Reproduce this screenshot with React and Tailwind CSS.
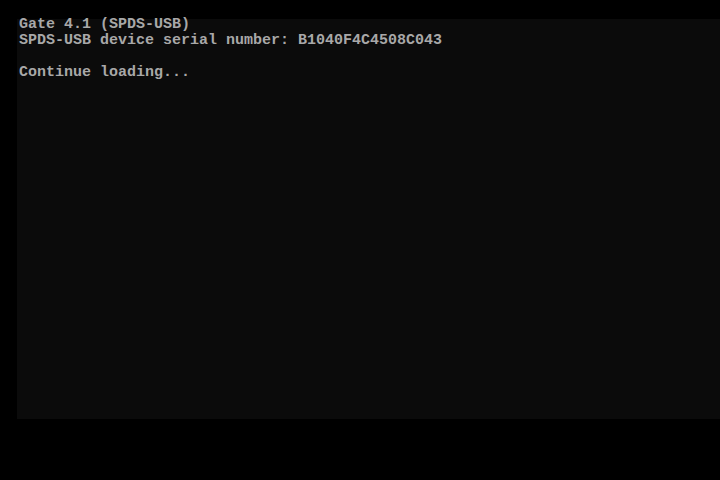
export default function App() {
  const lines = [
    'Gate 4.1 (SPDS-USB)',
    'SPDS-USB device serial number: B1040F4C4508C043',
    '',
    'Continue loading...',
  ]

  return (
    <div className="w-[720px] h-[480px] bg-black overflow-hidden flex flex-col">
      <div className="ml-[17px] mt-[19px] w-[703px] h-[400px] bg-[#0b0b0b] flex flex-col">
        <div className="pl-[2px] -mt-[2px] font-['Liberation_Mono',monospace] font-bold text-[15px] leading-[16px] text-[#a8a8a8] whitespace-pre">
          {lines.map((line, i) => (
            <div key={i} className="h-[16px]">{line}</div>
          ))}
        </div>
      </div>
    </div>
  )
}
